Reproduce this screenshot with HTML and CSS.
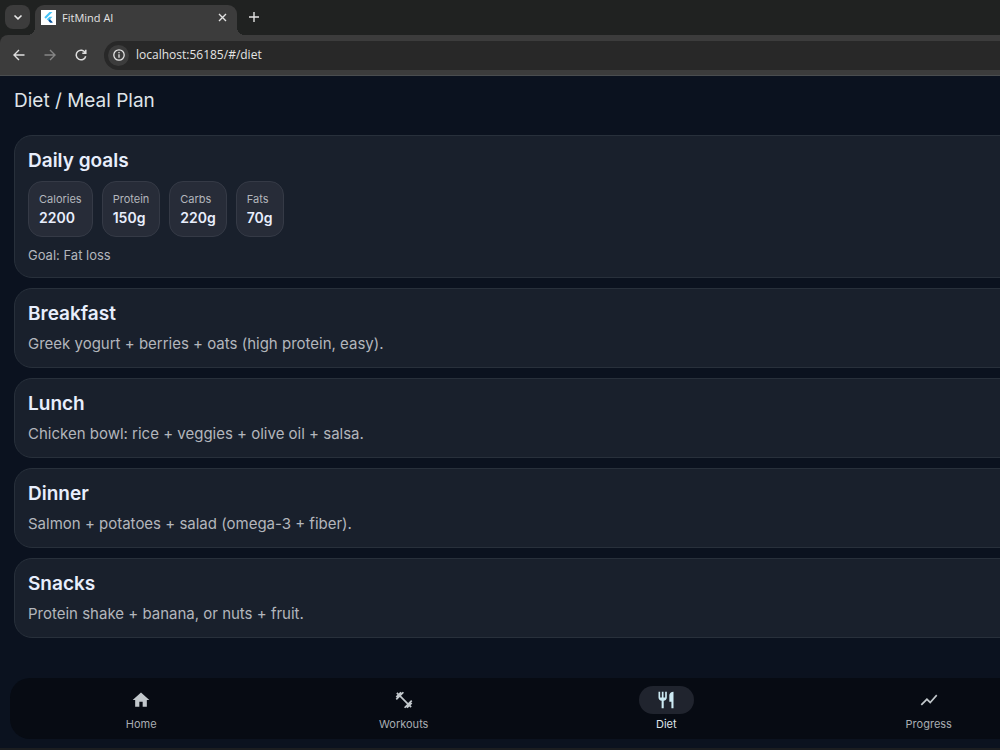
FILE: index.html
```html
<!DOCTYPE html>
<html lang="en">
<head>
<meta charset="utf-8">
<meta name="viewport" content="width=device-width, initial-scale=1">
<title>FitMind AI</title>
<link rel="stylesheet" href="styles.css">
</head>
<body>
<header class="browser">
  <div class="tab-strip">
    <button class="tab-search" aria-label="Search tabs"><svg width="24" height="24" viewBox="0 0 24 24"><path d="M8.500 10.500l3.500 3.300 3.500-3.300" fill="none" stroke="#e8e8e8" stroke-width="1.600"/></svg></button>
    <div class="tab">
      <svg class="favicon" width="15" height="15" viewBox="0 0 15 15"><path fill="#fff" d="M0 0h15v15H0z"/><path fill="#45c4f8" d="M8.500 2h3L4.800 8.700 3.300 7.200z"/><path fill="#45c4f8" d="M8.500 6.700h3L9 9.200l-1.500 1.500L5.700 9.200z"/><path fill="#0b579f" d="M7.300 10.700l1.600-1.600 2.800 3.200-.3.400H9.200z"/></svg>
      <span class="tab-title">FitMind AI</span>
      <button class="tab-close" aria-label="Close tab"><svg width="9" height="9" viewBox="0 0 9 9"><path d="M1 1l7 7M8 1L1 8" stroke="#e3e3e3" stroke-width="1.400"/></svg></button>
    </div>
    <button class="new-tab" aria-label="New tab"><svg width="10" height="10" viewBox="0 0 10 10"><path d="M5 0v10M0 5h10" stroke="#e3e3e3" stroke-width="1.400"/></svg></button>
  </div>
  <div class="toolbar">
    <button class="tool" aria-label="Back"><svg width="12" height="12" viewBox="0 0 12 12"><path d="M11.500 6H1.500M6 1L1 6l5 5" fill="none" stroke="#dedede" stroke-width="1.400"/></svg></button>
    <button class="tool" aria-label="Forward" disabled><svg width="12" height="12" viewBox="0 0 12 12"><path d="M.5 6h10M6 1l5 5-5 5" fill="none" stroke="#858585" stroke-width="1.400"/></svg></button>
    <button class="tool" aria-label="Reload"><svg width="12" height="12" viewBox="0 0 12 12"><path d="M10.300 3.800A4.800 4.800 0 1 0 10.700 7.200M10.800.7v3.500H7.300" fill="none" stroke="#dedede" stroke-width="1.500"/></svg></button>
    <div class="address">
      <button class="site-info" aria-label="Site information"><svg width="12" height="12" viewBox="0 0 12 12"><circle cx="6" cy="6" r="5.200" fill="none" stroke="#e3e3e3" stroke-width="1.300"/><path d="M6 5.300v3.500M6 3v1.300" stroke="#e3e3e3" stroke-width="1.300"/></svg></button>
      <input class="url" type="text" aria-label="Address" value="localhost:56185/#/diet">
    </div>
  </div>
</header>
<main class="page">
  <h1 class="page-title">Diet / Meal Plan</h1>
  <div class="cards">
    <section class="card">
      <h2 class="card-title">Daily goals</h2>
      <dl class="goals">
        <div class="goal"><dt>Calories</dt><dd>2200</dd></div>
        <div class="goal"><dt>Protein</dt><dd>150g</dd></div>
        <div class="goal"><dt>Carbs</dt><dd>220g</dd></div>
        <div class="goal"><dt>Fats</dt><dd>70g</dd></div>
      </dl>
      <p class="goal-note">Goal: Fat loss</p>
    </section>
    <section class="card"><h2 class="card-title">Breakfast</h2><p class="meal">Greek yogurt + berries + oats (high protein, easy).</p></section>
    <section class="card"><h2 class="card-title">Lunch</h2><p class="meal">Chicken bowl: rice + veggies + olive oil + salsa.</p></section>
    <section class="card"><h2 class="card-title">Dinner</h2><p class="meal">Salmon + potatoes + salad (omega-3 + fiber).</p></section>
    <section class="card"><h2 class="card-title">Snacks</h2><p class="meal">Protein shake + banana, or nuts + fruit.</p></section>
  </div>
  <nav class="nav" aria-label="Main">
    <a class="nav-item" href="#/home"><span class="nav-icon"><svg width="20" height="20" viewBox="0 0 24 24"><path d="M10 20v-6h4v6h5v-8h3L12 3 2 12h3v8z"/></svg></span>Home</a>
    <a class="nav-item" href="#/workouts"><span class="nav-icon"><svg width="20" height="20" viewBox="0 0 24 24"><path d="M20.570 14.860L22 13.430 20.570 12 17 15.570 8.430 7 12 3.430 10.570 2 9.140 3.430 7.710 2 5.570 4.140 4.140 2.710 2.710 4.140l1.430 1.430L2 7.710l1.430 1.430L2 10.570 3.430 12 7 8.430 15.570 17 12 20.570 13.430 22l1.430-1.430L16.290 22l2.140-2.140 1.430 1.430 1.430-1.430-1.430-1.430L22 16.290z"/></svg></span>Workouts</a>
    <a class="nav-item active" href="#/diet" aria-current="page"><span class="nav-icon"><svg width="20" height="20" viewBox="0 0 24 24"><path d="M11 9H9V2H7v7H5V2H3v7c0 2.120 1.660 3.840 3.750 3.970V22h2.500v-9.030C11.340 12.840 13 11.120 13 9V2h-2v7zm5-3v8h2.500v8H21V2c-2.760 0-5 2.240-5 4z"/></svg></span>Diet</a>
    <a class="nav-item" href="#/progress"><span class="nav-icon"><svg width="20" height="20" viewBox="0 0 24 24"><path d="M3.500 18.490l6-6.010 4 4L22 6.920l-1.410-1.410-7.090 7.970-4-4L2 16.990z"/></svg></span>Progress</a>
  </nav>
</main>
</body>
</html>
```
FILE: styles.css
```css
* { box-sizing: border-box; }
body {
  margin: 0;
  min-height: 100vh;
  display: flex;
  flex-direction: column;
  background: #0b121f;
  font-family: Inter, sans-serif;
  overflow-x: hidden;
}
h1, h2, p, dl, dd { margin: 0; }
button { padding: 0; border: 0; background: none; display: grid; place-items: center; }
svg { display: block; }

.browser { background: #202221; }
.tab-strip { height: 35px; display: flex; align-items: flex-start; padding: 5px 5px 0; }
.tab-search { width: 25px; height: 24px; border-radius: 8px; background: #3c3c3c; }
.tab {
  position: relative;
  display: flex;
  align-items: center;
  width: 202px;
  height: 30px;
  margin-left: 5px;
  padding: 0 9px 5px 6px;
  border-radius: 9px 9px 0 0;
  background: #3c3c3c;
}
.tab::before, .tab::after {
  content: "";
  position: absolute;
  bottom: 0;
  width: 8px;
  height: 8px;
}
.tab::before { right: 100%; background: radial-gradient(circle at 0 0, transparent 8px, #3c3c3c 8px); }
.tab::after { left: 100%; background: radial-gradient(circle at 100% 0, transparent 8px, #3c3c3c 8px); }
.tab-title { flex: 1; margin-left: 6px; color: #e3e3e3; font: 11px/16px "Open Sans", sans-serif; }
.tab-close { width: 11px; height: 12px; }
.new-tab { width: 24px; height: 24px; margin-left: 5px; }
.toolbar {
  display: flex;
  align-items: center;
  height: 41px;
  padding-left: 7px;
  border-bottom: 1px solid #4a4d4f;
  border-radius: 8px 0 0 0;
  background: #3c3c3c;
}
.tool { width: 23px; height: 24px; margin-right: 8px; }
.address {
  flex: 1;
  display: flex;
  align-items: center;
  height: 29px;
  margin-left: 4px;
  padding-left: 4px;
  border-radius: 15px 0 0 15px;
  background: #282828;
}
.site-info { width: 21px; height: 21px; border-radius: 50%; background: #3c3c3c; }
.url {
  flex: 1;
  min-width: 0;
  margin-left: 7px;
  padding: 0;
  border: 0;
  background: none;
  color: #e3e3e3;
  font: 12px/18px "Open Sans", sans-serif;
}

.page {
  flex: 1;
  display: flex;
  flex-direction: column;
  overflow: hidden;
  padding: 13px 0 9px;
  border-bottom: 2px solid #1b1d20;
}
.page-title { padding-left: 14px; color: #dfe3e8; font-size: 19px; font-weight: 400; line-height: 24px; }
.cards { display: grid; gap: 10px; margin: 22px -20px 0 14px; }
.card { padding: 13px; border: 1px solid #28303b; border-radius: 18px; background: #19202c; }
.card-title { color: #e8eefc; font-size: 19px; font-weight: 600; line-height: 24px; }
.goals { display: flex; gap: 9px; margin-top: 8px; }
.goal { padding: 9px 10px; border: 1px solid #353a46; border-radius: 14px; background: #272c38; }
.goal dt { color: #b3b6bc; font-size: 11px; line-height: 17px; }
.goal dd { color: #e8eefc; font-size: 14px; font-weight: 600; line-height: 19px; }
.goal-note { margin-top: 9px; color: #b3b6bc; font-size: 13px; line-height: 18px; }
.meal { margin-top: 8px; color: #b3b6bc; font-size: 15px; line-height: 20px; }

.nav {
  display: grid;
  grid-template-columns: repeat(4, 1fr);
  margin: auto -60px 0 10px;
  padding: 8px 0 7px;
  border-radius: 20px;
  background: #070b13;
}
.nav-item {
  display: flex;
  flex-direction: column;
  align-items: center;
  gap: 2px;
  color: #a9adb2;
  font-size: 11px;
  line-height: 16px;
  text-decoration: none;
}
.nav-icon { display: grid; place-items: center; width: 55px; height: 28px; border-radius: 14px; fill: #c2c8cc; }
.nav-item.active { color: #dfe3e8; }
.active .nav-icon { background: #20242e; fill: #cdeaf3; }
```
